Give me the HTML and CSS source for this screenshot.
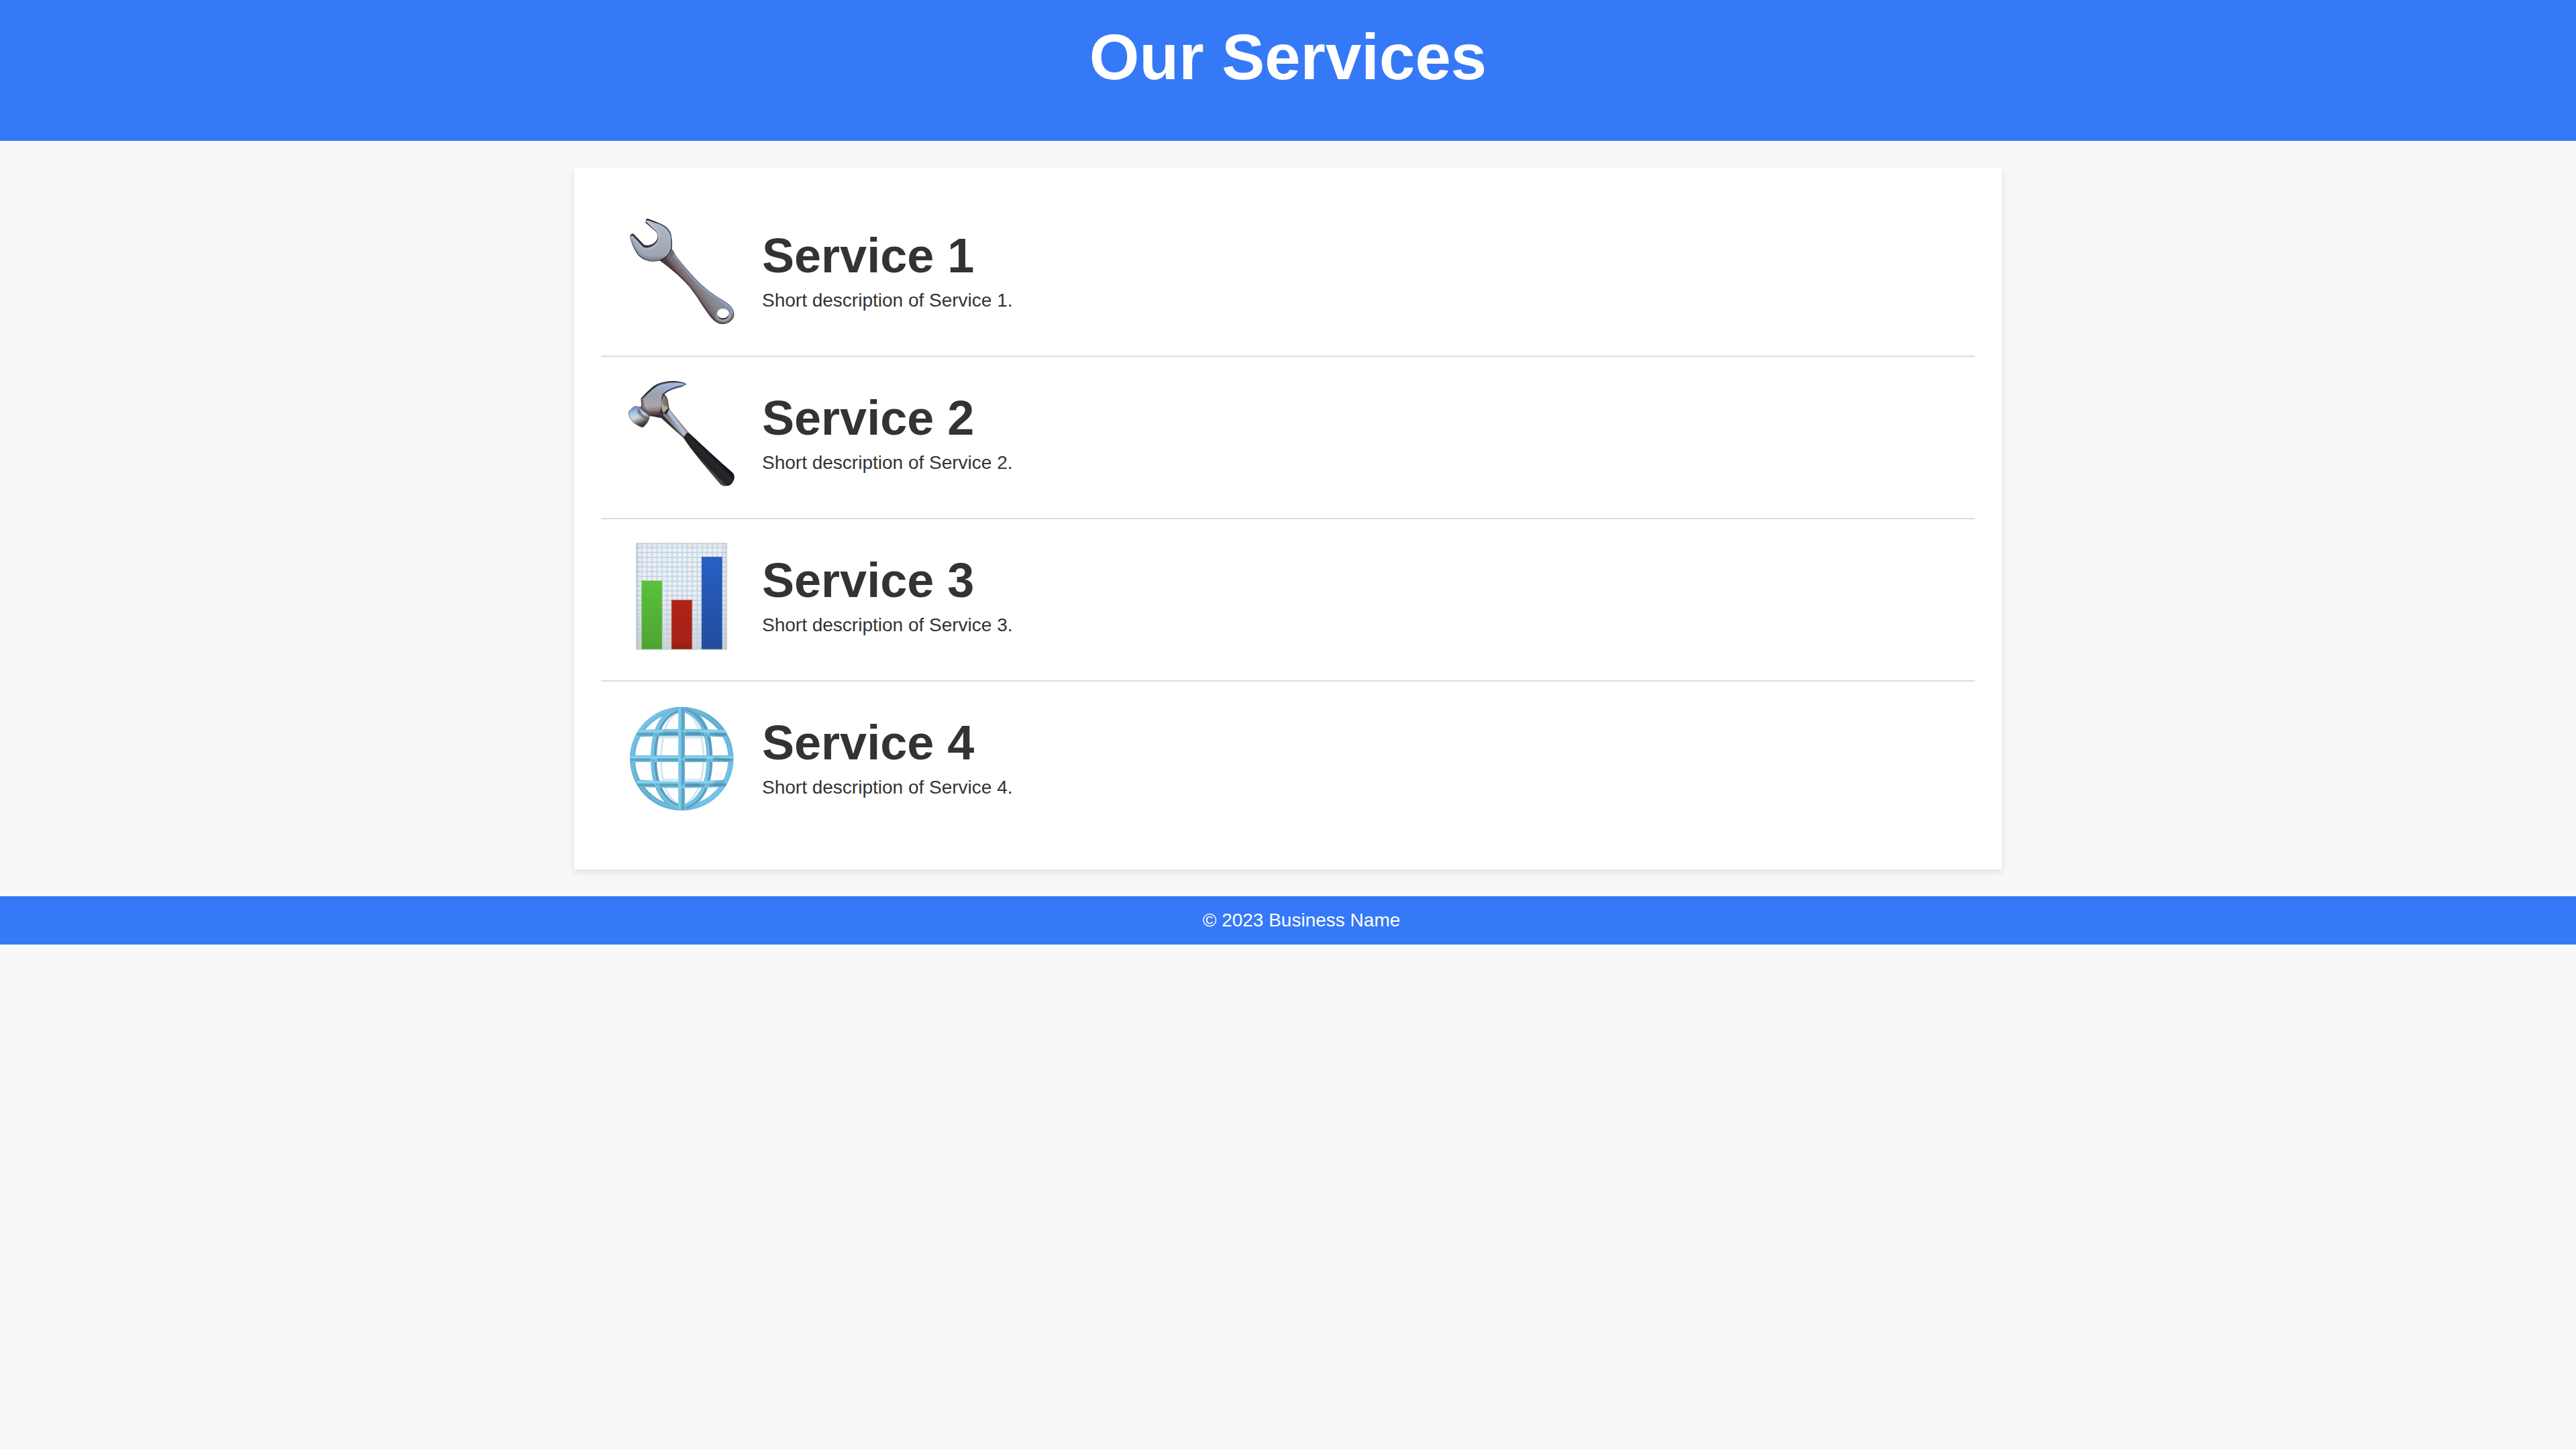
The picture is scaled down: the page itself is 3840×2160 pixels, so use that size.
FILE: index.html
```html
<!DOCTYPE html>
<html lang="en">
<head>
<meta charset="utf-8">
<title>Our Services</title>
<link rel="stylesheet" href="styles.css">
</head>
<body>
<header class="header"><h1 class="header-title">Our Services</h1></header>
<main class="services">
  <section class="service">
    <svg class="service-icon" viewBox="48 45 480 480" aria-hidden="true">
      <defs>
        <linearGradient id="wrenchHead" x1="150" y1="50" x2="150" y2="240" gradientUnits="userSpaceOnUse"><stop offset="0" stop-color="#b4bcc9"/><stop offset=".5" stop-color="#a8afbb"/><stop offset=".85" stop-color="#9fa5b2"/><stop offset="1" stop-color="#747582"/></linearGradient>
        <linearGradient id="wrenchArm" x1="310" y1="355" x2="375" y2="305" gradientUnits="userSpaceOnUse"><stop offset="0" stop-color="#4a3b40"/><stop offset=".2" stop-color="#73636a"/><stop offset=".5" stop-color="#858086"/><stop offset=".8" stop-color="#8b8c95"/><stop offset="1" stop-color="#8a8f9c"/></linearGradient>
        <filter id="soft" x="-10%" y="-10%" width="120%" height="120%"><feGaussianBlur stdDeviation="2.5"/></filter>
        <clipPath id="armShape"><path d="M190 235L245 183C258 212 286 246 326 291C360 330 402 369 454 402C489 423 519 439 523 471C525 497 500 520 469 520C443 518 421 493 405 470C378 434 354 390 320 349C285 309 238 270 190 235Z"/></clipPath>
      </defs>
      <path fill="url(#wrenchArm)" fill-rule="evenodd" d="M190 235L245 183C258 212 286 246 326 291C360 330 402 369 454 402C489 423 519 439 523 471C525 497 500 520 469 520C443 518 421 493 405 470C378 434 354 390 320 349C285 309 238 270 190 235ZM472 450C456 450 446 463 446 477C447 492 457 502 473 502C490 502 501 489 501 474C500 459 489 450 472 450Z"/>
      <g clip-path="url(#armShape)" fill="none">
        <path d="M190 235C238 270 285 309 320 349C354 390 378 434 405 470C421 493 443 518 469 520C500 520 525 497 523 471" stroke="#45343a" stroke-width="9" filter="url(#soft)"/>
        <path d="M249 195C262 218 286 246 324 293C358 332 400 372 452 405C486 426 511 441 517 469" stroke="#90acd8" stroke-width="8" filter="url(#soft)"/>
        <path d="M245 183C258 212 286 246 326 291C360 330 402 369 454 402C489 423 519 439 523 471" stroke="#363b46" stroke-width="4"/>
      </g>
      <path d="M441 478C444 499 461 508 480 505C496 501 506 487 506 472" fill="none" stroke="#a7bed2" stroke-width="4" filter="url(#soft)"/>
      <path d="M447 474C447 488 457 500 473 500C489 500 500 488 500 473C496 486 486 493 473 493C460 493 450 486 447 474Z" fill="#26282c"/>
      <path d="M192 235L212 238C235 226 244 208 247 187L255 203L210 243Z" fill="#40363c" opacity=".65" filter="url(#soft)"/>
      <path fill="#202228" d="M130 49L138 48L184 66C220 79 239 101 242 123C247 157 249 185 234 205C214 229 191 240 157 239C118 238 91 216 77 184C66 160 60 142 57 126L63 116L72 115L121 166C142 171 166 161 177 143C184 128 181 112 171 104L127 66Z"/>
      <path fill="url(#wrenchHead)" d="M128 60L135 54L180 70C216 85 232 104 238 126C244 157 244 183 231 203C210 228 186 237 157 237C122 236 95 214 80 184C70 163 61 144 58 128L66 123L117 178C146 187 174 166 184 143C186 124 182 111 174 101Z"/>
      <path d="M66 124L117 178C147 188 176 166 184 143C187 125 182 112 174 101L136 61" fill="none" stroke="#d2e2f5" stroke-width="4" filter="url(#soft)"/>
      <path d="M180 71C220 87 237 111 238 137" fill="none" stroke="#a9c7f0" stroke-width="5" filter="url(#soft)"/>
      <path d="M62 134C75 183 99 218 146 232" fill="none" stroke="#6179a1" stroke-width="4" filter="url(#soft)"/>
    </svg>
    <div class="service-text"><h2 class="service-name">Service 1</h2><p class="service-info">Short description of Service 1.</p></div>
  </section>
  <section class="service">
    <svg class="service-icon" viewBox="48 45 480 480" aria-hidden="true">
      <defs>
        <linearGradient id="hammerHead" x1="150" y1="65" x2="165" y2="210" gradientUnits="userSpaceOnUse"><stop offset="0" stop-color="#a3b8d8"/><stop offset=".3" stop-color="#9ba2ad"/><stop offset=".65" stop-color="#aaa7aa"/><stop offset=".83" stop-color="#806e70"/><stop offset="1" stop-color="#302b2a"/></linearGradient>
        <linearGradient id="hammerNeck" x1="245" y1="250" x2="282" y2="222" gradientUnits="userSpaceOnUse"><stop offset="0" stop-color="#37302e"/><stop offset=".28" stop-color="#746864"/><stop offset=".45" stop-color="#a4b9dc"/><stop offset=".65" stop-color="#b7c2d4"/><stop offset=".85" stop-color="#887c78"/><stop offset="1" stop-color="#3b3531"/></linearGradient>
        <linearGradient id="hammerFace" x1="72" y1="168" x2="108" y2="258" gradientUnits="userSpaceOnUse"><stop offset="0" stop-color="#6e90bd"/><stop offset=".2" stop-color="#a5c2e4"/><stop offset=".45" stop-color="#d0dae2"/><stop offset=".62" stop-color="#a0a2a5"/><stop offset=".78" stop-color="#57504c"/><stop offset="1" stop-color="#292724"/></linearGradient>
        <linearGradient id="hammerGrip" x1="390" y1="425" x2="430" y2="385" gradientUnits="userSpaceOnUse"><stop offset="0" stop-color="#48484a"/><stop offset=".2" stop-color="#202123"/><stop offset=".7" stop-color="#27282c"/><stop offset="1" stop-color="#131417"/></linearGradient>
        <pattern id="gripDots" width="18" height="18" patternUnits="userSpaceOnUse" patternTransform="rotate(12)"><circle cx="7" cy="7" r="2" fill="#3b3c40"/></pattern>
      </defs>
      <path fill="url(#hammerNeck)" d="M194 211L232 171L320 280L299 305Z"/>
      <path fill="url(#hammerGrip)" d="M319 278C380 333 449 400 517 458C529 471 525 491 513 506C501 519 481 521 464 512C432 474 338 367 297 302C300 289 308 281 319 278Z"/>
      <path fill="url(#gripDots)" d="M319 284C380 340 449 407 510 462C521 475 517 491 508 501C498 513 481 515 468 507C432 466 343 366 305 303Z"/>
      <path fill="#303033" d="M106 126C130 102 150 76 180 61C218 47 258 42 303 57L309 63L286 75C257 80 229 92 211 107C229 122 226 143 233 171C226 195 210 210 197 213C177 212 162 204 145 205L105 170L109 150Z"/>
      <path fill="url(#hammerHead)" d="M110 130C139 107 153 84 184 69C222 56 264 50 306 62C260 72 221 85 204 106C194 130 201 154 194 178C188 195 166 201 145 200L112 172C108 158 114 146 110 130Z"/>
      <path d="M180 73C221 57 262 55 299 64C258 68 220 83 205 99" fill="none" stroke="#9dbae8" stroke-width="6" filter="url(#soft)"/>
      <path d="M209 112C225 126 222 149 228 169L208 190C194 174 197 145 202 130Z" fill="#b4a99e"/>
      <path d="M208 110L202 150L214 162L229 159C224 143 228 124 208 110Z" fill="#655951" opacity=".65" filter="url(#soft)"/>
      <path d="M112 132C116 154 109 169 135 188C156 193 176 191 200 193" fill="none" stroke="#5c4547" stroke-width="7" filter="url(#soft)"/>
      <path d="M208 195C221 209 259 253 303 292" fill="none" stroke="#b9caeb" stroke-width="6" filter="url(#soft)"/>
      <path fill="url(#hammerFace)" stroke="#3f444c" stroke-width="2" d="M51 190C57 177 68 167 79 161L103 164C111 181 127 195 144 205C142 228 129 244 116 254C105 256 96 247 84 241C64 230 53 208 51 190Z"/>
      <path d="M101 164C97 185 119 209 142 209L143 219C118 217 92 201 89 180Z" fill="#343c4c" opacity=".65" filter="url(#soft)"/>
    </svg>
    <div class="service-text"><h2 class="service-name">Service 2</h2><p class="service-info">Short description of Service 2.</p></div>
  </section>
  <section class="service">
    <svg class="service-icon" viewBox="48 42 480 480" aria-hidden="true">
      <defs>
        <linearGradient id="paper" x1="0" y1="0" x2="0" y2="1"><stop offset="0" stop-color="#e2e2df"/><stop offset=".05" stop-color="#f0f0f0"/><stop offset=".45" stop-color="#efefef"/><stop offset="1" stop-color="#d5d3d1"/></linearGradient>
        <linearGradient id="edge" x1="0" y1="0" x2="1" y2="0"><stop offset="0" stop-color="#777" stop-opacity=".22"/><stop offset=".05" stop-color="#777" stop-opacity="0"/><stop offset=".95" stop-color="#777" stop-opacity="0"/><stop offset="1" stop-color="#777" stop-opacity=".22"/></linearGradient>
        <pattern id="grid" x="86" y="62" width="22.45" height="21.4" patternUnits="userSpaceOnUse"><path d="M0 2.5H22.45M2.5 0V21.4" stroke="#b8d3ed" stroke-width="4.5"/></pattern>
        <linearGradient id="green" x1="0" y1="0" x2="0" y2="1"><stop offset="0" stop-color="#5ac13d"/><stop offset="1" stop-color="#4ea333"/></linearGradient>
        <linearGradient id="red" x1="0" y1="0" x2="0" y2="1"><stop offset="0" stop-color="#ae2419"/><stop offset=".85" stop-color="#a62116"/><stop offset="1" stop-color="#911e15"/></linearGradient>
        <linearGradient id="blue" x1="0" y1="0" x2="0" y2="1"><stop offset="0" stop-color="#285fc6"/><stop offset="1" stop-color="#214c9b"/></linearGradient>
      </defs>
      <path fill="url(#paper)" d="M85 43H491V521H85Z"/>
      <path fill="url(#grid)" d="M85 43H491V521H85Z"/>
      <path fill="url(#edge)" d="M85 43H491V521H85Z"/>
      <path d="M86 44H490V520H86Z" fill="none" stroke="#c9d3d9" stroke-width="3"/>
      <path d="M109 212H201V520H109Z" fill="url(#green)" stroke="#8bcf7a" stroke-width="2"/>
      <path d="M243 298H335V520H243Z" fill="url(#red)" stroke="#cf7871" stroke-width="2"/>
      <path d="M378 106H469V520H378Z" fill="url(#blue)" stroke="#426eb7" stroke-width="2"/>
      <path d="M378 107H469" stroke="#2556a0" stroke-opacity=".45" stroke-width="3"/>
      <path d="M85 520H491" stroke="#d7d9d6" stroke-width="4"/>
    </svg>
    <div class="service-text"><h2 class="service-name">Service 3</h2><p class="service-info">Short description of Service 3.</p></div>
  </section>
  <section class="service">
    <svg class="service-icon" viewBox="48 45 480 480" aria-hidden="true">
      <defs>
        <linearGradient id="tubeV" x1="273" y1="0" x2="303" y2="0" gradientUnits="userSpaceOnUse"><stop offset="0" stop-color="#83cfee"/><stop offset=".35" stop-color="#78c5e7"/><stop offset=".7" stop-color="#5798b8"/><stop offset="1" stop-color="#75bddd"/></linearGradient>
        <linearGradient id="tubeH" x1="0" y1="0" x2="0" y2="1"><stop offset="0" stop-color="#6db5d6"/><stop offset=".3" stop-color="#8cdcfb"/><stop offset=".62" stop-color="#5596b5"/><stop offset="1" stop-color="#79c8e9"/></linearGradient>
        <linearGradient id="ring" x1="80" y1="80" x2="500" y2="500" gradientUnits="userSpaceOnUse"><stop offset="0" stop-color="#75c3e5"/><stop offset=".5" stop-color="#5ea8ca"/><stop offset="1" stop-color="#76caed"/></linearGradient>
      </defs>
      <g fill="none" stroke="#d6e5ef" stroke-width="9">
        <path d="M285 73C218 94 198 181 197 285S222 465 282 493M296 73C359 99 386 181 386 286S350 470 293 494"/>
        <path d="M190 190H386M199 379H377"/>
      </g>
      <circle cx="288.500" cy="285" r="220" fill="none" stroke="url(#ring)" stroke-width="24"/>
      <circle cx="285" cy="282" r="220" fill="none" stroke="#8cdcfb" stroke-opacity=".5" stroke-width="5" filter="url(#soft)"/>
      <g fill="none" stroke="url(#ring)" stroke-width="26">
        <path d="M274 65C187 91 163 182 163 285S194 473 274 504M301 65C386 91 413 182 413 285S384 473 302 504"/>
      </g>
      <g fill="none" stroke="#83d5f6" stroke-width="6" filter="url(#soft)">
        <path d="M269 69C184 99 159 185 159 285S190 470 271 502M308 70C382 99 409 185 409 285S382 470 306 500"/>
      </g>
      <g fill="none" stroke="#4b89a8" stroke-width="6" filter="url(#soft)">
        <path d="M272 72C196 99 171 185 171 285S204 467 274 493M306 64C393 98 421 185 421 285S393 474 308 505"/>
      </g>
      <g fill="url(#tubeH)">
        <path d="M94 156Q288 148 484 156Q493 169 487 188Q288 180 91 188Q84 170 94 156Z"/>
        <path d="M64 270H515Q522 285 515 300H64Q53 285 64 270Z"/>
        <path d="M93 379Q288 394 484 379Q496 391 484 411Q288 421 97 411Q82 394 93 379Z"/>
      </g>
      <g fill="#3e7894" opacity=".4" filter="url(#soft)"><path d="M308 163H373V177H308ZM205 162H271V176H205ZM433 168L482 176V186L433 181ZM434 277L510 289V297L434 289ZM307 285H397V298H307ZM433 386L482 384V401L433 405ZM308 395H371V409H308Z"/></g>
      <path d="M273 66Q288 42 303 66V509Q288 523 273 509Z" fill="url(#tubeV)"/>
      <g fill="#80d2f3" opacity=".7">
        <path d="M273 149L288 163L303 149V172L288 160L273 172ZM273 273L288 286L303 273V300L288 287L273 300ZM273 390L288 412L303 390V418H273Z"/>
        <path d="M149 270L163 286L179 270V300L163 288L149 300ZM399 270L413 286L427 270V300L413 288L399 300ZM161 156L174 170L190 156L182 183L174 172L163 184ZM386 156L400 168L416 156L411 184L400 173L390 182ZM163 383L178 405L192 386L186 414H172ZM388 386L404 405L419 383L408 414H394Z"/>
      </g>
    </svg>
    <div class="service-text"><h2 class="service-name">Service 4</h2><p class="service-info">Short description of Service 4.</p></div>
  </section>
</main>
<footer class="footer">© 2023 Business Name</footer>
</body>
</html>
```
FILE: styles.css
```css
* { box-sizing: border-box; }

body {
  margin: 0;
  background: #f8f8f8;
  color: #333;
  font-family: "Liberation Sans", Arial, sans-serif;
  font-size: 28px;
  line-height: 32px;
}

h1, h2, p { margin: 0; }

.header {
  height: 210px;
  padding-top: 30px;
  background: #3579f7;
  color: #fff;
  text-align: center;
}

.header-title {
  font-size: 96px;
  line-height: 110px;
}

.services {
  width: 2128px;
  margin: 40px auto;
  padding: 40px;
  background: #fff;
  box-shadow: 0 4px 10px rgba(0, 0, 0, 0.1);
}

.service {
  display: flex;
  align-items: flex-start;
  gap: 40px;
  padding: 35px 40px 45px;
  border-bottom: 2px solid #ddd;
}

.service:last-child { border-bottom: 0; }

.service-icon {
  display: block;
  flex: none;
  width: 160px;
  height: 160px;
}

.service-text { padding-top: 14px; }

.service-name {
  margin-bottom: 9px;
  font-size: 72px;
  line-height: 84px;
}

.footer {
  padding: 20px 0 20px 40px;
  background: #3579f7;
  color: #fff;
  text-align: center;
  line-height: 32px;
}
```
